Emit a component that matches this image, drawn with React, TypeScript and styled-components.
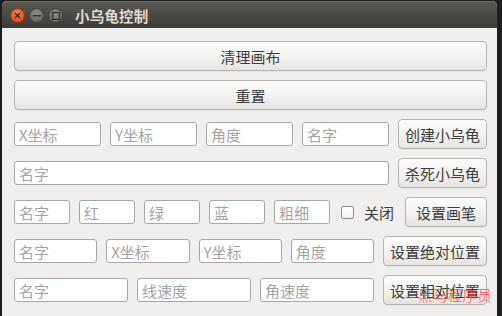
import React from "react";
import styled, { createGlobalStyle } from "styled-components";

const GlobalStyle = createGlobalStyle`
  html, body {
    margin: 0;
    padding: 0;
    background: #1f1e1c;
  }
  body {
    font-family: "Noto Sans CJK SC", "DejaVu Sans", sans-serif;
  }
`;

function App() {
  return (
    <Desktop>
      <GlobalStyle />
      <Window>
        <TitleBar>
          <WinButtons>
            <WinButton close>
              <svg width="7" height="7" viewBox="0 0 7 7">
                <path d="M1 1L6 6M6 1L1 6" stroke="#3a2018" strokeWidth="1.3" />
              </svg>
            </WinButton>
            <WinButton>
              <svg width="8" height="2" viewBox="0 0 8 2">
                <rect x="0" y="0" width="8" height="1.4" fill="#2e2d2a" />
              </svg>
            </WinButton>
            <WinButton>
              <svg width="8" height="8" viewBox="0 0 8 8">
                <rect x="0.6" y="0.6" width="6.8" height="6.8" fill="none" stroke="#2e2d2a" strokeWidth="1.2" />
              </svg>
            </WinButton>
          </WinButtons>
          <Title>小乌龟控制</Title>
        </TitleBar>

        <Content>
          <Row>
            <Button wide>清理画布</Button>
          </Row>
          <Row>
            <Button wide>重置</Button>
          </Row>
          <Row>
            <Field placeholder="X坐标" />
            <Field placeholder="Y坐标" />
            <Field placeholder="角度" />
            <Field placeholder="名字" />
            <Button>创建小乌龟</Button>
          </Row>
          <Row>
            <Field placeholder="名字" />
            <Button>杀死小乌龟</Button>
          </Row>
          <Row>
            <Field placeholder="名字" />
            <Field placeholder="红" />
            <Field placeholder="绿" />
            <Field placeholder="蓝" />
            <Field placeholder="粗细" />
            <CheckLabel>
              <Check type="checkbox" />
              关闭
            </CheckLabel>
            <Button>设置画笔</Button>
          </Row>
          <Row>
            <Field placeholder="名字" />
            <Field placeholder="X坐标" />
            <Field placeholder="Y坐标" />
            <Field placeholder="角度" />
            <Button>设置绝对位置</Button>
          </Row>
          <Row>
            <Field placeholder="名字" />
            <Field placeholder="线速度" />
            <Field placeholder="角速度" />
            <Button>设置相对位置</Button>
          </Row>
        </Content>

        <Watermark>黑马程序员</Watermark>
      </Window>
    </Desktop>
  );
}
export default App;

const Desktop = styled.div`
  width: 502px;
  height: 316px;
  padding: 1px 0 0 2px;
  box-sizing: border-box;
  overflow: hidden;
`;

const Window = styled.div`
  position: relative;
  width: 495px;
  height: 320px;
  background: #f0efed;
  border-radius: 5px 5px 0 0;
  overflow: hidden;
`;

const TitleBar = styled.div`
  display: flex;
  align-items: center;
  height: 27px;
  padding-left: 8px;
  background: linear-gradient(#5a5852, #3d3c38);
  box-shadow: inset 0 1px 0 rgba(255, 255, 255, 0.12);
`;

const WinButtons = styled.div`
  display: flex;
  gap: 4px;
  padding-top: 2px;
`;

const WinButton = styled.div<{ close?: boolean }>`
  display: flex;
  align-items: center;
  justify-content: center;
  width: 15px;
  height: 15px;
  border-radius: 50%;
  box-sizing: border-box;
  border: 1px solid ${(p) => (p.close ? "#9a3a16" : "#3f3e3a")};
  background: ${(p) =>
    p.close
      ? "radial-gradient(circle at 50% 35%, #f7875a, #e0521f 70%)"
      : "radial-gradient(circle at 50% 35%, #8f8d87, #6b6a65 70%)"};
`;

const Title = styled.div`
  margin-left: 12px;
  padding-top: 1px;
  color: #dfdbd2;
  font-size: 14.5px;
  font-weight: bold;
  letter-spacing: 0.2px;
`;

const Content = styled.div`
  display: flex;
  flex-direction: column;
  gap: 9px;
  padding: 13px 10px 0 12px;
`;

const Row = styled.div`
  display: flex;
  align-items: center;
  gap: 9px;
  height: 30px;
`;

const Field = styled.input`
  flex: 1;
  min-width: 0;
  height: 24px;
  box-sizing: border-box;
  padding: 0 4px;
  border: 1px solid #a9a7a3;
  border-radius: 3px;
  background: #fff;
  font-family: "Noto Sans CJK SC", "DejaVu Sans", sans-serif;
  font-size: 15px;
  color: #3c3c3c;
  outline: none;

  &::placeholder {
    color: #a3a3a3;
  }
`;

const Button = styled.button<{ wide?: boolean }>`
  flex: ${(p) => (p.wide ? "1" : "none")};
  min-width: 82px;
  height: 30px;
  box-sizing: border-box;
  padding: 0 6px;
  border: 1px solid #b6b2ac;
  border-radius: 4px;
  background: linear-gradient(#fdfdfc, #f1f0ee 60%, #e6e4e1);
  box-shadow: 0 1px 0 rgba(0, 0, 0, 0.04);
  font-family: "Noto Sans CJK SC", "DejaVu Sans", sans-serif;
  font-size: 15px;
  color: #3c3c3c;
  white-space: nowrap;
`;

const CheckLabel = styled.label`
  display: flex;
  align-items: center;
  gap: 10px;
  width: 57px;
  padding-left: 2px;
  box-sizing: border-box;
  font-size: 15px;
  color: #3c3c3c;
`;

const Check = styled.input`
  appearance: none;
  margin: 0;
  width: 13px;
  height: 13px;
  flex: none;
  box-sizing: border-box;
  border: 1px solid #8e8c88;
  border-radius: 2px;
  background: linear-gradient(#ffffff, #f2f1ef);
`;

const Watermark = styled.div`
  position: absolute;
  right: 5px;
  top: 283px;
  color: rgba(255, 40, 40, 0.85);
  font-size: 14.5px;
  font-weight: 300;
  letter-spacing: 0.3px;
  pointer-events: none;
`;
